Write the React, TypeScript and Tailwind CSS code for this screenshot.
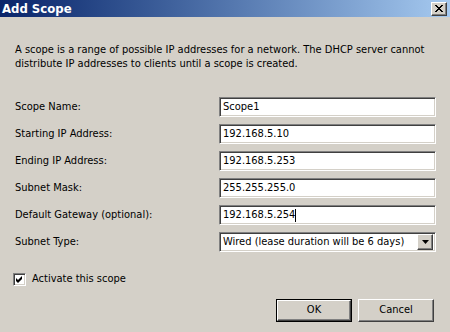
const fields = [
    { label: "Scope Name:", value: "Scope1" },
    { label: "Starting IP Address:", value: "192.168.5.10" },
    { label: "Ending IP Address:", value: "192.168.5.253" },
    { label: "Subnet Mask:", value: "255.255.255.0" },
    { label: "Default Gateway (optional):", value: "192.168.5.254", caret: true },
];

const sunken = "border border-t-[#808080] border-l-[#808080] border-b-white border-r-white shadow-[inset_1px_1px_0_#404040,inset_-1px_-1px_0_#d4d0c8]";
const raised = "border border-t-white border-l-white border-b-[#404040] border-r-[#404040] shadow-[inset_-1px_-1px_0_#808080]";

const App = () => {
    return (
        <div className="w-[450px] h-[332px] bg-[#d4d0c8] text-[11px] text-black overflow-hidden" style={{ fontFamily: "'DejaVu Sans Condensed', 'DejaVu Sans', sans-serif" }}>
            <div className="h-[17px] flex items-center justify-between pl-[2px] pr-[3px] bg-gradient-to-r from-[#0a246a] to-[#a6caf0]">
                <span className="text-white font-bold text-[13px] leading-none">Add Scope</span>
                <div className={`w-[16px] h-[14px] bg-[#d4d0c8] flex items-center justify-center ${raised}`}>
                    <svg width="8" height="7" viewBox="0 0 8 7">
                        <path d="M0 0 L7 7 M1 0 L8 7 M7 0 L0 7 M8 0 L1 7" stroke="black" strokeWidth="1" shapeRendering="crispEdges" />
                    </svg>
                </div>
            </div>

            <p className="mt-[26px] px-[15px] leading-[14px]">
                A scope is a range of possible IP addresses for a network. The DHCP server cannot distribute IP addresses to clients until a scope is created.
            </p>

            <div className="mt-[26px] flex flex-col gap-[7px] pl-[15px]">
                {fields.map((f, i) => (
                    <div key={i} className="flex items-center h-[20px]">
                        <span className="w-[204px]">{f.label}</span>
                        <div className={`w-[217px] h-[20px] bg-white flex items-center pl-[3px] ${sunken}`}>
                            <span>{f.value}</span>
                            {f.caret && <span className="w-px h-[13px] bg-black" />}
                        </div>
                    </div>
                ))}
                <div className="flex items-center h-[20px]">
                    <span className="w-[204px]">Subnet Type:</span>
                    <div className={`w-[217px] h-[20px] bg-white flex items-center justify-between pl-[3px] pr-[2px] ${sunken}`}>
                        <span className="whitespace-nowrap">Wired (lease duration will be 6 days)</span>
                        <div className={`w-[16px] h-[16px] shrink-0 bg-[#d4d0c8] flex items-center justify-center ${raised}`}>
                            <svg width="7" height="4" viewBox="0 0 7 4">
                                <path d="M0 0 H7 L3.5 4 Z" fill="black" />
                            </svg>
                        </div>
                    </div>
                </div>
            </div>

            <label className="mt-[19px] ml-[13px] flex items-center gap-[6px]">
                <span className={`w-[13px] h-[13px] bg-white flex items-center justify-center ${sunken}`}>
                    <svg width="7" height="7" viewBox="0 0 7 7">
                        <path d="M0 2 L2 4 L6 0 V3 L2 7 L0 5 Z" fill="black" />
                    </svg>
                </span>
                <span>Activate this scope</span>
            </label>

            <div className="mt-[11px] flex justify-end gap-[6px] pr-[16px]">
                <button className="w-[76px] h-[23px] border border-black bg-[#d4d0c8] flex">
                    <span className={`flex-1 flex items-center justify-center ${raised}`}>OK</span>
                </button>
                <button className={`w-[76px] h-[23px] bg-[#d4d0c8] flex items-center justify-center ${raised}`}>
                    Cancel
                </button>
            </div>
        </div>
    );
};

export default App;
